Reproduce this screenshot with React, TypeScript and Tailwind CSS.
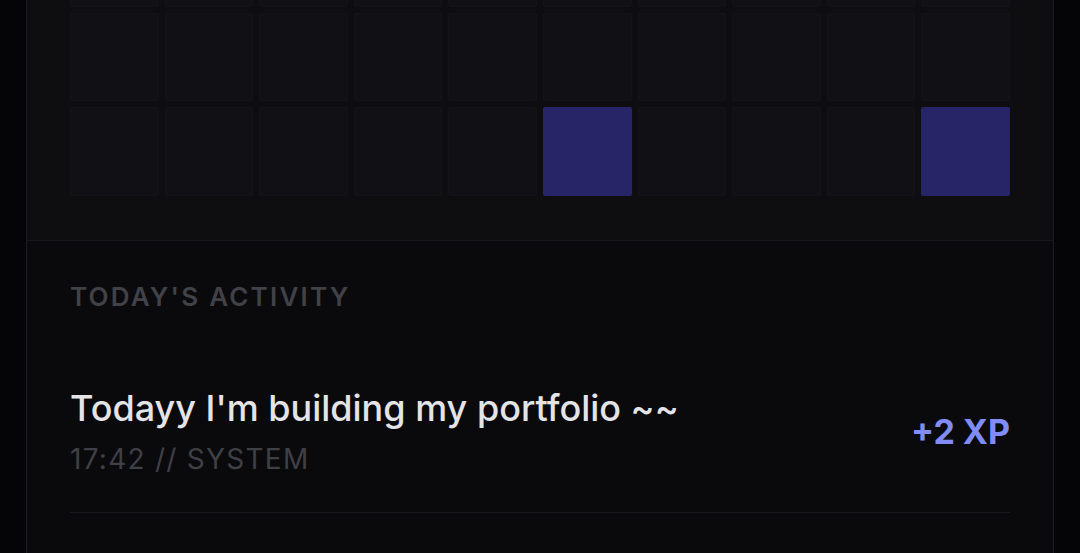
import React from "react"

const filled = new Set([25, 29])

export default function App() {
  const cells = Array.from({ length: 30 }, (_, i) => i)

  return (
    <div className="h-[553px] overflow-hidden bg-[#050507] font-['Inter',sans-serif]">
      <div className="mx-[26px] -mt-[127px] border border-[#1c1c21] bg-[#0a0a0c]">
        {/* activity grid */}
        <div className="border-b border-[#18181c] bg-[#0e0e11] px-[43px] pt-11 pb-11">
          <div className="grid grid-cols-10 gap-[6px]">
            {cells.map((i) => (
              <div
                key={i}
                className={
                  filled.has(i)
                    ? "aspect-square rounded-[2px] bg-[#272567]"
                    : "aspect-square rounded-[2px] border border-[#141418] bg-[#111115]"
                }
              />
            ))}
          </div>
        </div>

        {/* today's activity */}
        <div className="px-[43px] pt-[40px] pb-24">
          <h3 className="text-[26px] font-semibold uppercase leading-8 tracking-[0.085em] text-[#414148]">
            Today's Activity
          </h3>
          <div className="mt-[73px] flex items-center justify-between border-b border-[#1a1a1e] pb-[35px]">
            <div>
              <p className="text-[36px] font-medium leading-[44px] text-[#e4e4e7]">Todayy I'm building my portfolio ~~</p>
              <p className="mt-[11px] text-[28px] leading-9 tracking-[0.045em] text-[#3f3f46]">17:42 // SYSTEM</p>
            </div>
            <span className="text-[34px] font-bold text-[#818cf8]">+2 XP</span>
          </div>
        </div>
      </div>
    </div>
  )
}
